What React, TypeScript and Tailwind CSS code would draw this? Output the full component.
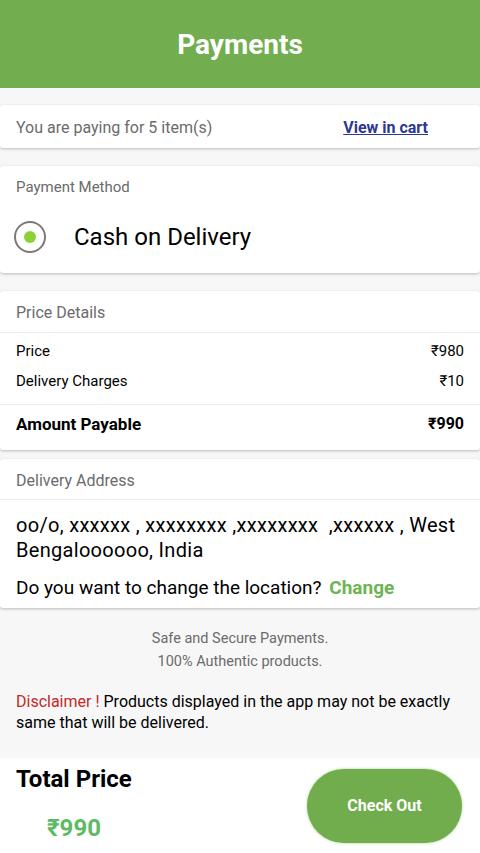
import React from 'react'

const FONT = { fontFamily: 'Roboto, "Liberation Sans", Arial, sans-serif' }

function Card({ className = '', children }: { className?: string; children: React.ReactNode }) {
  return (
    <div className={`rounded-[3px] bg-white shadow-[0_1px_3px_rgba(0,0,0,0.25)] ${className}`}>{children}</div>
  )
}

function PriceRow({ label, value }: { label: string; value: string }) {
  return (
    <div className="flex items-center justify-between px-4 text-[15px] leading-[20px] text-black">
      <span>{label}</span>
      <span>{value}</span>
    </div>
  )
}

export default function App() {
  return (
    <div style={FONT} className="flex h-[853px] w-[480px] flex-col overflow-hidden bg-[#f7f7f7]">
      {/* Header */}
      <header className="flex h-[88px] shrink-0 items-center justify-center bg-[#72ae50]">
        <h1 className="pt-[2px] text-[28px] font-bold text-white">Payments</h1>
      </header>

      <div className="flex flex-col pt-[17px]">
        {/* Items */}
        <Card className="flex h-[43px] items-center justify-between pl-4 pr-[52px] pt-[3px]">
          <span className="text-[16px] text-[#6b6b6b]">You are paying for 5 item(s)</span>
          <a href="#" className="text-[16px] font-bold text-[#2d3890] underline">
            View in cart
          </a>
        </Card>

        {/* Payment method */}
        <Card className="mt-[18px] h-[107px] pt-[10px]">
          <div className="px-4 text-[15px] text-[#6b6b6b]">Payment Method</div>
          <div className="mt-[20px] flex items-center">
            <div className="ml-[14px] flex h-[32px] w-[32px] items-center justify-center rounded-full border-2 border-[#7a7a7a]">
              <div className="h-[12px] w-[12px] rounded-full bg-[#8bd334]" />
            </div>
            <span className="ml-[28px] text-[24px] text-black">Cash on Delivery</span>
          </div>
        </Card>

        {/* Price details */}
        <Card className="mt-[18px] h-[159px]">
          <div className="flex h-[42px] items-center border-b border-[#ececec] px-4 pt-[3px] text-[16px] text-[#6b6b6b]">
            Price Details
          </div>
          <div className="flex flex-col gap-[10px] pt-[8px] pb-[13px]">
            <PriceRow label="Price" value="₹980" />
            <PriceRow label="Delivery Charges" value="₹10" />
          </div>
          <div className="flex items-center justify-between border-t border-[#ececec] px-4 pt-[9px] font-bold leading-[20px] text-black">
            <span className="text-[17px]">Amount Payable</span>
            <span className="text-[16px]">₹990</span>
          </div>
        </Card>

        {/* Delivery address */}
        <Card className="mt-[9px] h-[149px]">
          <div className="flex h-[41px] items-center border-b border-[#ececec] px-4 pt-[3px] text-[16px] text-[#6b6b6b]">
            Delivery Address
          </div>
          <p className="whitespace-pre-wrap px-4 pt-[13px] text-[20px] leading-[25px] tracking-[0.3px] text-black">
            {'oo/o, xxxxxx , xxxxxxxx ,xxxxxxxx  ,xxxxxx , West Bengaloooooo, India'}
          </p>
          <p className="mt-[12px] px-4 text-[19px] leading-[25px] text-black">
            Do you want to change the location?{' '}
            <span className="ml-[3px] font-bold text-[#6db552]">Change</span>
          </p>
        </Card>

        {/* Footer notes */}
        <div className="mt-[19px] text-center text-[14.5px] leading-[23px] text-[#6b6b6b]">
          <div>Safe and Secure Payments.</div>
          <div>100% Authentic products.</div>
        </div>
        <p className="mt-[18px] px-4 text-[16px] leading-[21px] text-black">
          <span className="text-[#c62828]">Disclaimer !</span> Products displayed in the app may not be exactly
          same that will be delivered.
        </p>
      </div>

      {/* Bottom bar */}
      <div className="mt-auto flex h-[95px] shrink-0 items-start justify-between bg-white">
        <div className="flex flex-col pl-4 pt-[6px]">
          <span className="text-[24px] font-bold leading-[30px] text-black">Total Price</span>
          <span className="ml-[31px] mt-[19px] text-[24px] font-bold leading-[30px] text-[#5dbb63]">₹990</span>
        </div>
        <button className="mr-[18px] mt-[11px] flex h-[74px] w-[155px] items-center justify-center rounded-full bg-[#71ad4c] text-[16px] font-bold text-white shadow-[0_0_3px_rgba(113,173,76,0.6)]">
          Check Out
        </button>
      </div>
    </div>
  )
}
